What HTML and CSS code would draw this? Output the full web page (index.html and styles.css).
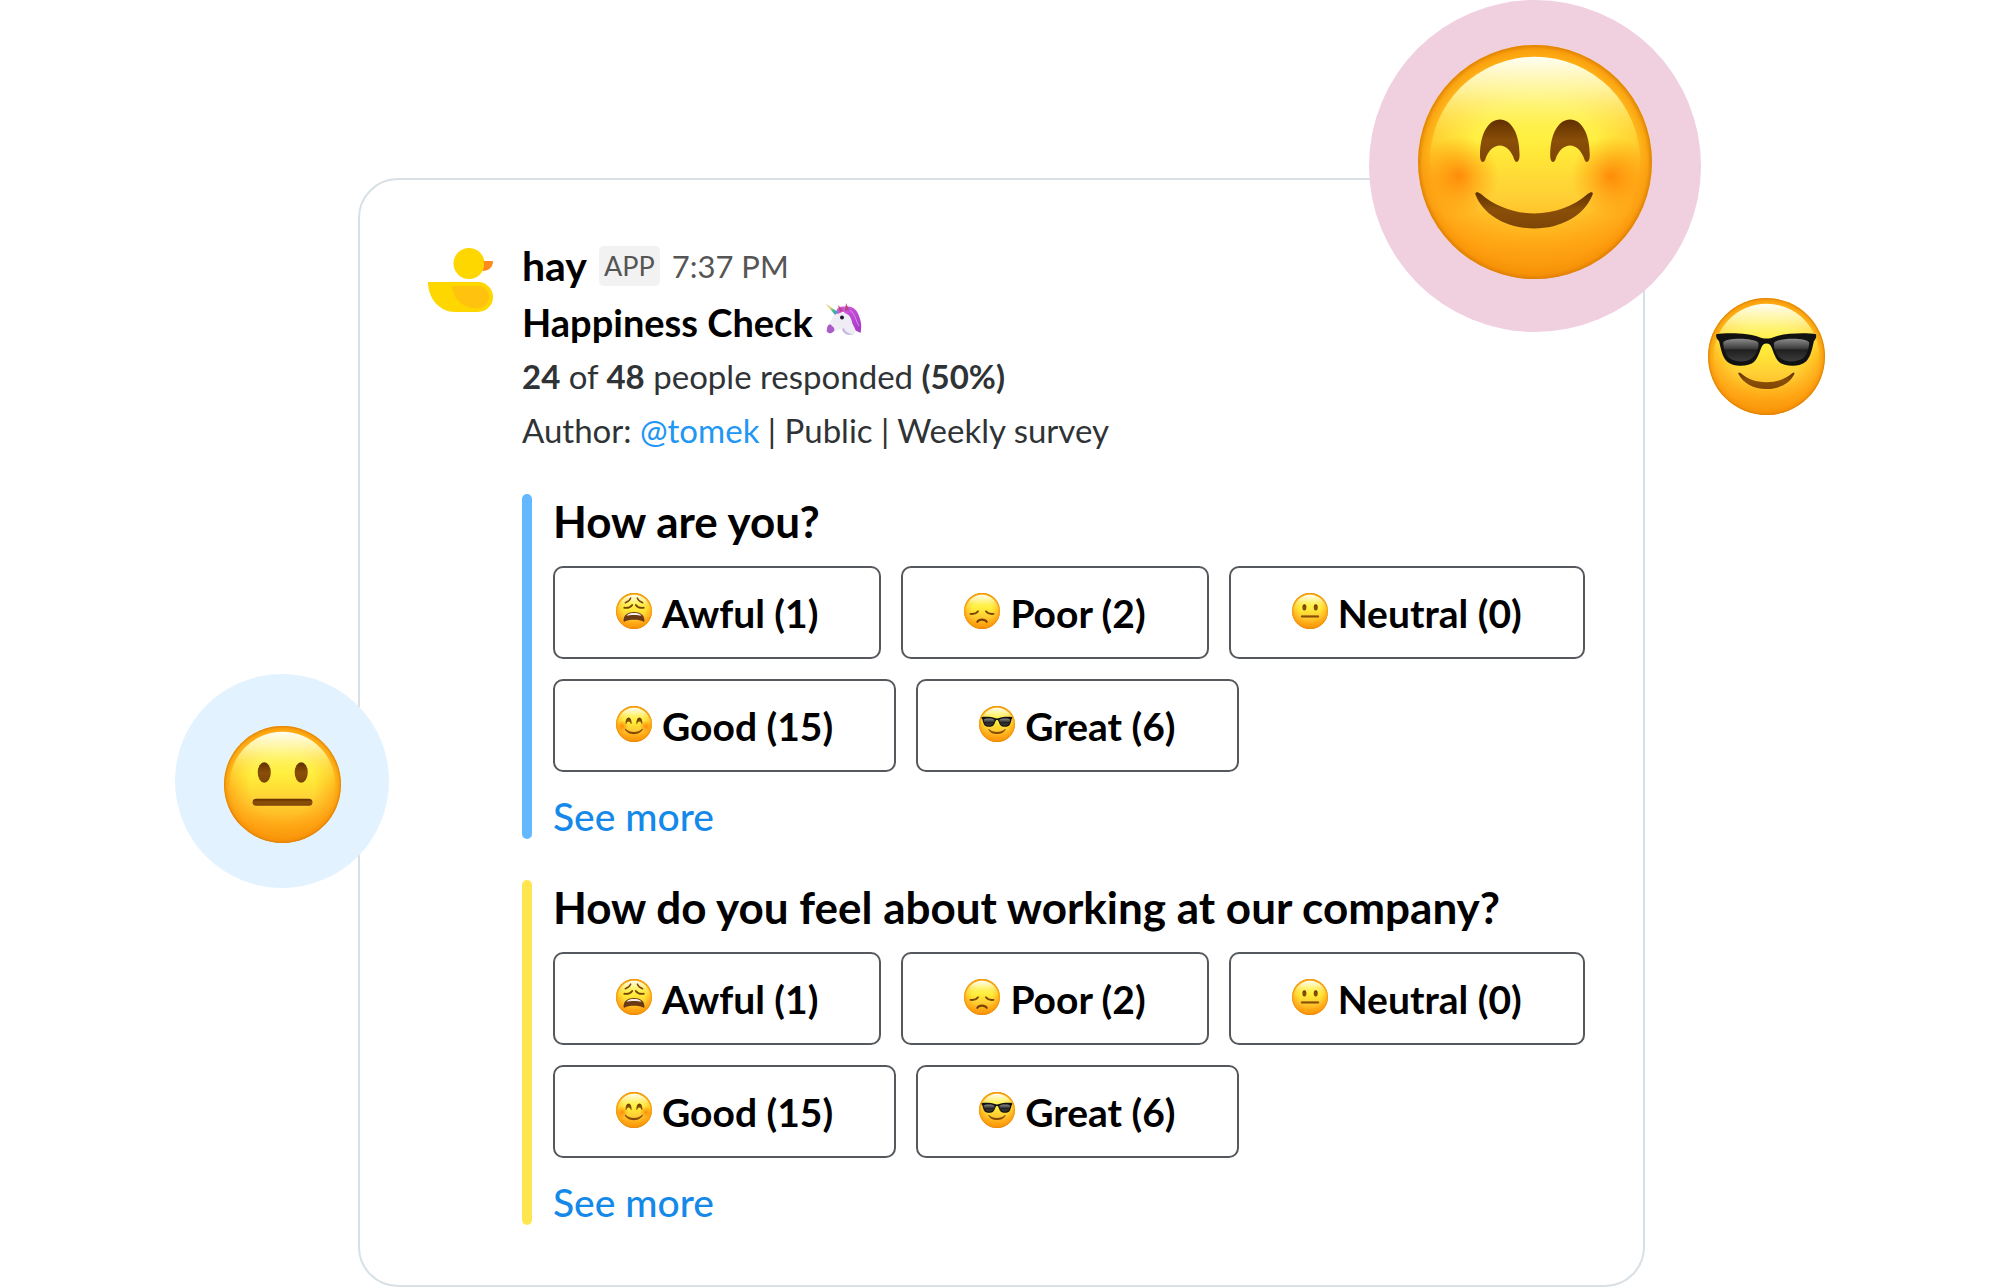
FILE: index.html
```html
<!DOCTYPE html>
<html lang="en">

<head>
    <meta charset="UTF-8">
    <meta name="viewport" content="width=device-width, initial-scale=1.0">
    <title>Happiness Check</title>
    <link rel="stylesheet" href="styles.css">
</head>

<body>
    <!-- Shared emoji shapes -->
    <svg class="sprite" aria-hidden="true">
        <defs>
            <linearGradient id="skin" x1="0" y1="0" x2="0" y2="1">
                <stop offset="0" stop-color="#ffc91c" />
                <stop offset="0.2" stop-color="#ffe63a" />
                <stop offset="0.4" stop-color="#ffee36" />
                <stop offset="0.65" stop-color="#ffcf35" />
                <stop offset="0.85" stop-color="#ffae18" />
                <stop offset="1" stop-color="#ee950c" />
            </linearGradient>
            <radialGradient id="rim" cx="0.5" cy="0.5" r="0.5">
                <stop offset="0.55" stop-color="#ff9a0a" stop-opacity="0" />
                <stop offset="0.88" stop-color="#ff960a" stop-opacity="0.55" />
                <stop offset="0.96" stop-color="#f88f05" stop-opacity="0.75" />
                <stop offset="1" stop-color="#dc7c05" stop-opacity="0.95" />
            </radialGradient>
            <linearGradient id="shine" x1="0" y1="0" x2="0" y2="1">
                <stop offset="0" stop-color="#fffff4" />
                <stop offset="0.15" stop-color="#fffcb4" stop-opacity="0.85" />
                <stop offset="0.32" stop-color="#fff566" stop-opacity="0.5" />
                <stop offset="0.5" stop-color="#ffee3c" stop-opacity="0.12" />
                <stop offset="0.6" stop-color="#ffee3c" stop-opacity="0" />
            </linearGradient>
            <radialGradient id="blush">
                <stop offset="0" stop-color="#ff7a00" stop-opacity="0.8" />
                <stop offset="0.5" stop-color="#ff8200" stop-opacity="0.4" />
                <stop offset="1" stop-color="#ff8a00" stop-opacity="0" />
            </radialGradient>
            <linearGradient id="brown" x1="0" y1="0" x2="0" y2="1">
                <stop offset="0" stop-color="#613000" />
                <stop offset="0.5" stop-color="#8a4f08" />
                <stop offset="1" stop-color="#7d4405" />
            </linearGradient>
            <linearGradient id="lens" x1="0" y1="0" x2="0" y2="1">
                <stop offset="0" stop-color="#8b8b8b" />
                <stop offset="0.42" stop-color="#3f3f3f" />
                <stop offset="0.5" stop-color="#1f1f1f" />
                <stop offset="1" stop-color="#3c3c3c" />
            </linearGradient>
            <linearGradient id="mane" x1="0" y1="0" x2="1" y2="1">
                <stop offset="0" stop-color="#d65ce0" />
                <stop offset="1" stop-color="#a23ac4" />
            </linearGradient>
            <linearGradient id="horn" x1="0" y1="0" x2="1" y2="1">
                <stop offset="0" stop-color="#f08a5a" />
                <stop offset="0.35" stop-color="#e8d060" />
                <stop offset="0.6" stop-color="#3fc08a" />
                <stop offset="1" stop-color="#4d7ae0" />
            </linearGradient>
        </defs>

        <symbol id="face" viewBox="0 0 100 100">
            <circle cx="50" cy="50" r="50" fill="url(#skin)" />
            <circle cx="50" cy="50" r="50" fill="url(#rim)" />
            <circle cx="50" cy="50" r="45" fill="url(#shine)" />
        </symbol>

        <symbol id="good" viewBox="0 0 100 100">
            <use href="#face" />
            <circle cx="17.5" cy="56" r="17" fill="url(#blush)" />
            <circle cx="82.5" cy="56" r="17" fill="url(#blush)" />
            <g fill="url(#brown)">
                <path d="M26.5 47C26.5 38 30 31.8 35 31.8S43.4 38 43.4 47C43.4 50.4 41.8 50.6 41.2 49C39.8 45 37.5 43 35 43S30 45 28.7 49C28 50.6 26.5 50.4 26.5 47Z" />
                <path d="M56.5 47C56.5 38 60 31.8 65 31.8S73.4 38 73.4 47C73.4 50.4 71.8 50.6 71.2 49C69.8 45 67.5 43 65 43S60 45 58.7 49C58 50.6 56.5 50.4 56.5 47Z" />
                <path d="M24.6 64C24.2 62.6 25.6 62.6 26.8 63.6C33 69 41 72 49.7 72S66.5 69 72.6 63.6C73.8 62.6 75 62.6 74.6 64C71 73 61 78.4 49.7 78.4S28 73 24.6 64Z" />
            </g>
        </symbol>

        <symbol id="great" viewBox="0 0 100 100">
            <use href="#face" />
            <path d="M26 65C25.6 63.6 26.8 63.4 28 64.4C34 69.5 41 72 50 72S66 69.5 72 64.4C73.2 63.4 74.2 63.6 73.8 65C70 73 61 77.8 50 77.8S30 73 26 65Z" fill="url(#brown)" />
            <path d="M7 31C16 29.4 36 30 44 33.5C47 35 53 35 56 33.5C64 30 84 29.4 92.3 31C93 34 91.5 35.5 90.5 37C89 43 88 50 84 54C79 59 66 59 61 55C56.5 51 55 42 53 40C51 38.5 49 38.5 47 40C45 42 43.5 51 39 55C34 59 21 59 16 54C12 50 11 43 9.5 37C8 35.5 6.5 34 7 31Z" fill="#111" />
            <path d="M13 38C14 34 38 33.5 43 38C44 42 41 49 37 52C33 55 23 55 18.5 51.5C15 49 13 42 13 38Z" fill="url(#lens)" />
            <path d="M86.5 38C85.5 34 61.5 33.5 56.5 38C55.5 42 58.5 49 62.5 52C66.5 55 76.5 55 81 51.5C84.5 49 86.5 42 86.5 38Z" fill="url(#lens)" />
        </symbol>

        <symbol id="neutral" viewBox="0 0 100 100">
            <use href="#face" />
            <ellipse cx="34.4" cy="39.8" rx="5.6" ry="8.8" fill="url(#brown)" />
            <ellipse cx="66" cy="39.8" rx="5.6" ry="8.8" fill="url(#brown)" />
            <rect x="24.4" y="62.2" width="51.2" height="6" rx="3" fill="url(#brown)" />
        </symbol>

        <symbol id="poor" viewBox="0 0 100 100">
            <use href="#face" />
            <g fill="none" stroke="#7a4208" stroke-width="5" stroke-linecap="round">
                <path d="M18 58C27 59 35 57 39 51" />
                <path d="M82 58C73 59 65 57 61 51" />
                <path d="M37 80C42 72 58 72 63 80" stroke-width="6" />
            </g>
        </symbol>

        <symbol id="awful" viewBox="0 0 100 100">
            <use href="#face" />
            <g fill="none" stroke="#7a4208" stroke-width="5" stroke-linecap="round">
                <path d="M23 41C32 42 41 39 45 33" />
                <path d="M77 41C68 42 59 39 55 33" />
                <path d="M26 27C33 25 38 21 41 14" stroke-width="4" />
                <path d="M74 27C67 25 62 21 59 14" stroke-width="4" />
            </g>
            <path d="M21 77C21 61 33 53 50 53S79 61 79 77C79 81 76 80 73 78C60 73 40 73 27 78C24 80 21 81 21 77Z" fill="#6b3a14" />
            <path d="M29 63C34 57 41 55.5 50 55.5S66 57 71 63C60 60.5 40 60.5 29 63Z" fill="#f4efe6" />
        </symbol>

        <symbol id="unicorn" viewBox="0 0 36 34">
            <path d="M17 5C24 1 31 6 33 13C35 18 36 23 34.5 30C31 28 29 28 27 25L19 12Z" fill="url(#mane)" />
            <path d="M2 23C5 19 6 12 12 10C19 8 26 13 26 19C27 23 31 27 29 30C24 34 17 32 16 26C12 26 9 29 5 30C1 30 0 27 2 23Z" fill="#f0ecf6" />
            <path d="M16 26C17 31 23 33 28 31C23 31 19 29 18 25Z" fill="#c3b9dc" />
            <path d="M1 26C1 22 4 20 6 23C8 24 9 26 8 28C6 30 4 31 3 30C1 29.5 0 28 1 26Z" fill="#a95cc8" />
            <path d="M12 5C10 7 10 9 11 11C14 11 16 8 20 9C25 12 25 17 27 21C29 25 32 26 34 29C35 22 34 15 30 9C26 4 18 2 12 5Z" fill="url(#mane)" />
            <path d="M14 9L12 2L17 7ZM19 8L20 0L23 7Z" fill="#b8477e" />
            <path d="M0 1L12 9L9 12Z" fill="url(#horn)" />
            <circle cx="16" cy="14.5" r="2" fill="#1d1430" />
            <path d="M24 7C29 11 30 18 33 23" fill="none" stroke="#e58af0" stroke-width="1" />
        </symbol>
    </svg>

    <main class="card">
        <div class="message">
            <svg class="avatar" viewBox="0 0 66 66" role="img" aria-label="hay">
                <circle cx="41" cy="15.5" r="15.5" fill="#ffd700" />
                <path d="M55.5 13H65C65 19 61 23 54.5 23C56 20 56.5 16 55.5 13Z" fill="#ff8c1a" />
                <path d="M0 34H50A15 15 0 0 1 50 64H27C12 64 0 51 0 34Z" fill="#ffd700" />
                <path d="M24 38H50A10.5 10.5 0 0 1 50 60H44C33 58 25 50 24 38Z" fill="#ffc20e" />
            </svg>

            <div class="content">
                <header class="intro">
                    <div class="sender">
                        <span class="name">hay</span>
                        <span class="badge">APP</span>
                        <time class="time">7:37 PM</time>
                    </div>
                    <h1 class="title">Happiness Check <svg class="unicorn" role="img" aria-label="unicorn"><use href="#unicorn" /></svg></h1>
                    <p class="info"><b>24</b> of <b>48</b> people responded <b>(50%)</b></p>
                    <p class="info">Author: <a class="mention" href="#">@tomek</a> | Public | Weekly survey</p>
                </header>

                <section class="question blue">
                    <h2 class="question-title">How are you?</h2>
                    <div class="answers">
                        <button class="answer"><svg class="emoji"><use href="#awful" /></svg>Awful (1)</button>
                        <button class="answer"><svg class="emoji"><use href="#poor" /></svg>Poor (2)</button>
                        <button class="answer"><svg class="emoji"><use href="#neutral" /></svg>Neutral (0)</button>
                        <button class="answer"><svg class="emoji"><use href="#good" /></svg>Good (15)</button>
                        <button class="answer"><svg class="emoji"><use href="#great" /></svg>Great (6)</button>
                    </div>
                    <a class="more" href="#">See more</a>
                </section>

                <section class="question yellow">
                    <h2 class="question-title">How do you feel about working at our company?</h2>
                    <div class="answers">
                        <button class="answer"><svg class="emoji"><use href="#awful" /></svg>Awful (1)</button>
                        <button class="answer"><svg class="emoji"><use href="#poor" /></svg>Poor (2)</button>
                        <button class="answer"><svg class="emoji"><use href="#neutral" /></svg>Neutral (0)</button>
                        <button class="answer"><svg class="emoji"><use href="#good" /></svg>Good (15)</button>
                        <button class="answer"><svg class="emoji"><use href="#great" /></svg>Great (6)</button>
                    </div>
                    <a class="more" href="#">See more</a>
                </section>
            </div>
        </div>

        <!-- Stickers around the card -->
        <div class="sticker sticker-good"><svg><use href="#good" /></svg></div>
        <div class="sticker sticker-great"><svg><use href="#great" /></svg></div>
        <div class="sticker sticker-neutral"><svg><use href="#neutral" /></svg></div>
    </main>
</body>

</html>
```
FILE: styles.css
```css
* {
    box-sizing: border-box;
}

body {
    margin: 0;
    padding: 178px 355px 0 358px;
    background-color: #fff;
    font-family: Lato, sans-serif;
    color: #000;
    overflow-x: hidden;
}

h1,
h2,
p {
    margin: 0;
}

a {
    text-decoration: none;
}

.sprite {
    position: absolute;
    width: 0;
    height: 0;
}

.card {
    position: relative;
    padding: 58px 56px 60px 68px;
    border: 2px solid #d8e0e5;
    border-radius: 40px;
}

.message {
    display: flex;
    gap: 28px;
}

.avatar {
    flex: none;
    width: 66px;
    height: 66px;
    margin-top: 10px;
}

.content {
    flex: 1;
}

.intro {
    margin-bottom: 37px;
}

.sender {
    display: flex;
    align-items: center;
    gap: 12px;
    height: 57px;
    padding-bottom: 2px;
}

.name {
    font-size: 41px;
    font-weight: 700;
}

.badge {
    padding: 0 5px;
    border-radius: 5px;
    background-color: #f2f2f2;
    color: #555;
    font-size: 27px;
    line-height: 40px;
}

.time {
    color: #555;
    font-size: 31px;
}

.title {
    font-size: 38px;
    font-weight: 700;
    line-height: 54px;
}

.unicorn {
    width: 36px;
    height: 34px;
    margin-left: 4px;
}

.info {
    color: #303336;
    font-size: 33px;
    line-height: 54px;
}

.mention {
    color: #2196f3;
}

.question {
    position: relative;
    padding-left: 31px;
    margin-bottom: 41px;
}

.question:last-child {
    margin-bottom: 0;
}

/* Rounded color bar */
.question::before {
    content: "";
    position: absolute;
    left: 0;
    top: 0;
    bottom: 0;
    width: 10px;
    border-radius: 5px;
}

.blue::before {
    background-color: #64b8ff;
}

.yellow::before {
    background-color: #ffe550;
}

.question-title {
    padding-bottom: 18px;
    font-size: 44px;
    font-weight: 700;
    line-height: 54px;
}

.answers {
    display: flex;
    flex-wrap: wrap;
    gap: 20px;
}

.answer {
    display: flex;
    align-items: center;
    gap: 10px;
    height: 93px;
    padding: 0 61px;
    border: 2px solid #55585c;
    border-radius: 10px;
    background-color: #fff;
    color: #000;
    font-family: inherit;
    font-size: 39px;
    font-weight: 700;
}

.emoji {
    width: 36px;
    height: 36px;
    margin-bottom: 3px;
}

.more {
    display: block;
    padding-top: 22px;
    color: #1589e9;
    font-size: 39px;
    font-weight: 500;
    line-height: 45px;
}

.sticker {
    position: absolute;
    display: flex;
    align-items: center;
    justify-content: center;
    border-radius: 50%;
}

.sticker svg {
    width: 117px;
    height: 117px;
}

.sticker-good {
    top: -180px;
    right: -58px;
    width: 332px;
    height: 332px;
    padding-bottom: 8px;
    background-color: #f0cfdf;
}

.sticker-good svg {
    width: 234px;
    height: 234px;
}

.sticker-great {
    top: 118px;
    right: -182px;
}

.sticker-neutral {
    top: 494px;
    left: -185px;
    width: 214px;
    height: 214px;
    padding-top: 6px;
    background-color: #e2f2ff;
}
```
